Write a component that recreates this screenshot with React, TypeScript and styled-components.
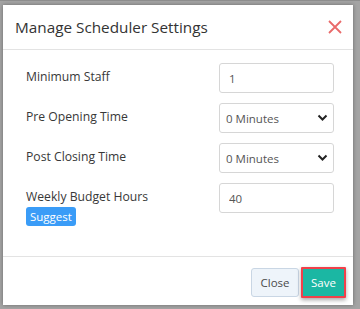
import React from 'react';
import styled, { createGlobalStyle } from 'styled-components';

const GlobalStyle = createGlobalStyle`
    html, body {
        margin: 0;
        padding: 0;
        background: #a4a4a4;
        font-family: 'Open Sans', 'Liberation Sans', sans-serif;
    }
`;

const Backdrop = styled.div`
    width: 360px;
    height: 309px;
    padding: 4px 0 0 3px;
    box-sizing: border-box;
    background: #a4a4a4;
    border-top: 1px solid #8e8e8e;
`;

const Modal = styled.div`
    width: 350px;
    height: 300px;
    background: #fff;
    display: flex;
    flex-direction: column;
    box-shadow: 0 0 4px rgba(0, 0, 0, 0.35);
    box-sizing: border-box;
`;

const Header = styled.div`
    height: 45px;
    display: flex;
    align-items: center;
    justify-content: space-between;
    padding: 0 10px 0 12px;
    border-bottom: 1px solid #e3e3e3;
    box-sizing: border-box;
`;

const Title = styled.h4`
    margin: 0;
    font-size: 15.3px;
    font-weight: 400;
    color: #333;
`;

const CloseIcon = styled.button`
    border: 0;
    background: none;
    padding: 0;
    width: 16px;
    height: 16px;
    display: flex;
    cursor: pointer;
`;

const Body = styled.div`
    flex: 1;
    padding: 13px 19px 0 23px;
    display: flex;
    flex-direction: column;
    gap: 10px;
    border-bottom: 1px solid #e3e3e3;
`;

const Row = styled.div`
    display: flex;
    justify-content: space-between;
    align-items: flex-start;
`;

const LabelCol = styled.div`
    display: flex;
    flex-direction: column;
    align-items: flex-start;
    padding-top: 5px;
`;

const Label = styled.label`
    font-size: 12.2px;
    color: #383838;
    line-height: 18px;
`;

const Suggest = styled.span`
    margin-top: 1px;
    background: #3a9cf7;
    color: #fff;
    font-size: 11.5px;
    line-height: 19px;
    padding: 0 4px;
    border-radius: 3px;
`;

const Field = styled.input`
    width: 115px;
    height: 30px;
    box-sizing: border-box;
    border: 1px solid #d6d6d6;
    border-radius: 3px;
    padding: 0 9px;
    font-family: inherit;
    font-size: 11.5px;
    color: #555;
    outline: none;
`;

const SelectWrap = styled.div`
    position: relative;
    width: 115px;
    height: 30px;
`;

const Select = styled.select`
    appearance: none;
    width: 100%;
    height: 100%;
    box-sizing: border-box;
    border: 1px solid #d6d6d6;
    border-radius: 3px;
    background: #fff;
    padding: 0 6px;
    font-family: inherit;
    font-size: 11.5px;
    color: #555;
    outline: none;
`;

const Chevron = styled.svg`
    position: absolute;
    right: 6px;
    top: 11px;
    pointer-events: none;
`;

const Footer = styled.div`
    height: 48px;
    display: flex;
    align-items: center;
    justify-content: flex-end;
    gap: 2px;
    padding: 2px 7px 0 0;
    box-sizing: border-box;
`;

const Button = styled.button<{ $primary?: boolean }>`
    font-family: inherit;
    font-size: 11.5px;
    cursor: pointer;
    border-radius: 3px;
    padding: 0;
    ${(p) =>
        p.$primary
            ? `
        width: 45px;
        height: 31px;
        background: #1bb7a3;
        color: #fff;
        border: 2px solid #f2404a;
        border-radius: 1px;
        box-shadow: 0 2px 4px rgba(0, 0, 0, 0.35);
    `
            : `
        width: 48px;
        height: 29px;
        background: #eef4fa;
        color: #4a4a4a;
        border: 1px solid #c9d6e4;
    `}
`;

const settings = [
    { label: 'Minimum Staff', kind: 'input', value: '1' },
    { label: 'Pre Opening Time', kind: 'select', value: '0 Minutes' },
    { label: 'Post Closing Time', kind: 'select', value: '0 Minutes' },
    { label: 'Weekly Budget Hours', kind: 'input', value: '40', suggest: true },
];

export default function App() {
    return (
        <>
            <GlobalStyle />
            <Backdrop>
                <Modal>
                    <Header>
                        <Title>Manage Scheduler Settings</Title>
                        <CloseIcon aria-label="close">
                            <svg width="16" height="16" viewBox="0 0 16 16">
                                <path d="M2 2 L14 14 M14 2 L2 14" stroke="#e96a6a" strokeWidth="1.8" />
                            </svg>
                        </CloseIcon>
                    </Header>
                    <Body>
                        {settings.map((s) => (
                            <Row key={s.label}>
                                <LabelCol>
                                    <Label>{s.label}</Label>
                                    {s.suggest && <Suggest>Suggest</Suggest>}
                                </LabelCol>
                                {s.kind === 'input' ? (
                                    <Field defaultValue={s.value} />
                                ) : (
                                    <SelectWrap>
                                        <Select defaultValue={s.value}>
                                            <option>0 Minutes</option>
                                            <option>15 Minutes</option>
                                            <option>30 Minutes</option>
                                        </Select>
                                        <Chevron width="11" height="8" viewBox="0 0 11 8">
                                            <path d="M1.5 1.5 L5.5 5.5 L9.5 1.5" fill="none" stroke="#222" strokeWidth="2" />
                                        </Chevron>
                                    </SelectWrap>
                                )}
                            </Row>
                        ))}
                    </Body>
                    <Footer>
                        <Button>Close</Button>
                        <Button $primary>Save</Button>
                    </Footer>
                </Modal>
            </Backdrop>
        </>
    );
}
